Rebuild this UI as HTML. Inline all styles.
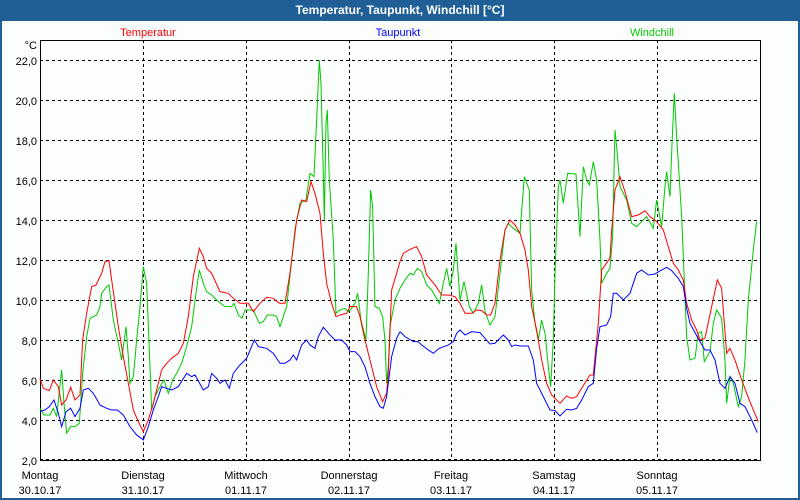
<!DOCTYPE html>
<html><head><meta charset="utf-8"><style>
html,body{margin:0;padding:0;width:800px;height:500px;overflow:hidden;background:#1f5f95;font-family:"Liberation Sans",sans-serif}
#t{position:absolute;left:0;top:0;width:800px;height:20px;line-height:20px;text-align:center;color:#fff;font-weight:bold;font-size:12px}
#w{position:absolute;left:2px;top:21px;width:796px;height:477px;background:#fcfefe}
svg{position:absolute;left:0;top:0}
</style></head><body>
<div id="t">Temperatur, Taupunkt, Windchill [°C]</div>
<div id="w"></div>
<svg width="800" height="500" font-family="Liberation Sans, sans-serif" font-size="11">
<g stroke="#000" stroke-width="1" stroke-dasharray="3,3" fill="none">
<path d="M40 60.5H760M40 100.5H760M40 140.5H760M40 180.5H760M40 220.5H760M40 260.5H760M40 300.5H760M40 340.5H760M40 380.5H760M40 420.5H760M40 459.5H760"/>
<path d="M143.5 40V460M246.5 40V460M349.5 40V460M451.5 40V460M554.5 40V460M657.5 40V460"/>
</g>
<rect x="40.5" y="40.5" width="720" height="420" fill="none" stroke="#000"/>
<g text-anchor="end" fill="#000">
<text x="37" y="49">°C</text>
<text x="37" y="65">22,0</text><text x="37" y="105">20,0</text><text x="37" y="145">18,0</text><text x="37" y="185">16,0</text><text x="37" y="225">14,0</text><text x="37" y="265">12,0</text><text x="37" y="305">10,0</text><text x="37" y="345">8,0</text><text x="37" y="385">6,0</text><text x="37" y="425">4,0</text><text x="37" y="465">2,0</text>
</g>
<g text-anchor="middle" fill="#000">
<text x="40" y="479">Montag</text><text x="40" y="494">30.10.17</text>
<text x="143" y="479">Dienstag</text><text x="143" y="494">31.10.17</text>
<text x="246" y="479">Mittwoch</text><text x="246" y="494">01.11.17</text>
<text x="349" y="479">Donnerstag</text><text x="349" y="494">02.11.17</text>
<text x="451" y="479">Freitag</text><text x="451" y="494">03.11.17</text>
<text x="554" y="479">Samstag</text><text x="554" y="494">04.11.17</text>
<text x="657" y="479">Sonntag</text><text x="657" y="494">05.11.17</text>
<text x="148" y="36" fill="#f00">Temperatur</text>
<text x="398" y="36" fill="#00f">Taupunkt</text>
<text x="652" y="36" fill="#0c0">Windchill</text>
</g>
<g fill="none" stroke-width="1" vector-effect="non-scaling-stroke">
<g transform="translate(40,40) scale(0.3333)">
<polyline vector-effect="non-scaling-stroke" stroke="#00c800" points="0,1105 12,1125 30,1125 40,1105 50,1130 65,990 72,1090 80,1180 92,1160 105,1160 118,1150 128,1000 140,890 150,835 170,825 180,800 185,760 200,740 207,735 220,840 235,910 245,960 258,860 265,950 270,1030 280,1010 290,900 300,800 310,680 320,730 330,980 335,1110 345,1070 360,1040 372,1020 385,1060 398,1020 410,1000 425,970 440,920 455,860 468,760 478,690 490,730 500,755 515,765 530,780 555,800 575,800 582,790 595,825 606,835 615,810 625,810 640,810 658,850 670,845 682,825 700,825 710,830 720,860 740,800 752,690 765,570 780,490 798,480 810,400 822,410 830,240 838,60 843,130 850,400 853,540 858,250 862,210 868,420 880,600 888,820 900,810 915,805 925,815 935,805 945,790 953,760 963,840 978,900 985,700 992,450 998,500 1005,800 1018,805 1028,830 1035,900 1040,1030 1045,980 1050,860 1065,780 1080,745"/>
<polyline vector-effect="non-scaling-stroke" stroke="#f00" points="0,1015 10,1045 28,1052 40,1020 55,1040 65,1095 78,1080 92,1042 105,1080 120,1065 128,900 140,820 155,740 168,735 185,700 195,665 207,662 215,720 235,860 250,950 265,1030 280,1110 295,1145 310,1175 325,1140 340,1090 355,1030 365,990 380,970 395,955 415,940 430,910 445,830 460,710 478,625 490,650 500,685 515,700 540,755 565,760 580,775 600,790 625,790 640,815 660,790 680,772 700,775 718,790 735,790 750,700 770,540 785,480 800,485 813,425 825,460 840,520 850,640 860,730 875,790 888,830 900,825 920,820 930,800 950,800 960,830 975,900 990,960 1010,1040 1028,1085 1040,1060 1045,1000 1055,750 1070,700 1080,665"/>
<polyline vector-effect="non-scaling-stroke" stroke="#00f" points="0,1115 15,1110 28,1100 42,1080 55,1120 65,1160 78,1115 92,1105 105,1130 120,1105 130,1050 145,1045 160,1060 180,1095 200,1105 215,1110 232,1110 250,1125 270,1160 290,1185 310,1200 325,1160 340,1110 355,1070 365,1040 380,1045 395,1050 415,1040 440,1000 455,1010 465,1005 490,1050 505,1040 515,1000 530,1015 540,1030 555,1020 568,1045 580,1000 600,975 620,955 643,900 655,920 680,925 700,940 720,970 735,970 750,960 760,945 770,960 785,915 800,900 810,915 825,925 835,890 850,862 870,885 885,900 905,900 920,915 930,935 945,935 960,950 975,980 990,1030 1005,1070 1020,1100 1030,1105 1040,1070 1045,1030 1055,950 1070,895 1080,875"/>
</g>
<g transform="translate(400,40) scale(0.3333)">
<polyline vector-effect="non-scaling-stroke" stroke="#00c800" points="0,745 15,720 30,700 40,705 52,685 65,695 80,735 95,750 118,790 130,730 140,685 150,740 160,690 168,610 180,780 192,725 208,800 220,820 235,790 245,735 255,815 270,855 285,830 300,700 315,570 325,550 340,565 360,580 373,410 388,450 395,750 405,850 415,900 425,840 435,880 445,980 452,1040 460,900 465,700 475,440 480,420 490,490 503,400 528,402 540,590 550,380 560,420 568,435 580,365 590,420 600,600 605,730 620,700 630,685 638,590 642,400 645,270 650,320 660,440 680,480 695,550 710,560 740,530 760,565 770,480 785,560 795,440 800,395 810,470 817,290 823,160 830,290 845,530 855,770 860,890 870,960 885,955 895,880 905,875 913,965 930,935 940,850 950,810 965,835 975,960 980,1090 990,1010 1000,1030 1015,1100 1025,1070 1035,960 1045,780 1060,630 1070,545"/>
<polyline vector-effect="non-scaling-stroke" stroke="#f00" points="0,665 10,640 30,628 50,620 65,650 80,705 105,735 125,765 145,765 165,770 180,790 195,820 215,820 230,810 245,812 260,825 272,825 285,790 300,660 315,570 330,540 345,555 360,580 375,630 385,690 395,800 410,870 425,960 440,1030 455,1065 480,1090 500,1068 515,1075 530,1070 545,1045 570,1005 580,1005 595,850 605,690 630,655 635,575 645,450 660,410 675,455 695,530 715,525 735,512 750,530 770,545 790,570 820,670 835,690 850,720 860,790 875,840 890,870 900,900 915,895 935,800 952,720 965,745 980,940 990,925 1005,960 1020,1005 1040,1060 1060,1110 1075,1145"/>
<polyline vector-effect="non-scaling-stroke" stroke="#00f" points="0,875 15,890 40,905 55,905 65,915 85,930 100,940 118,925 145,915 160,905 170,880 180,870 195,885 215,875 240,878 255,895 270,912 285,910 310,885 325,900 335,920 345,915 360,918 385,918 400,960 410,1030 430,1070 450,1110 465,1112 480,1128 500,1108 515,1110 530,1105 545,1080 565,1040 580,1030 590,925 600,860 620,855 632,830 640,760 650,760 670,780 690,760 710,700 725,690 745,705 765,702 785,690 800,682 815,692 835,715 850,740 860,805 870,850 885,878 900,905 915,930 930,930 945,960 960,1030 975,1045 990,1010 1005,1030 1020,1090 1035,1100 1055,1140 1072,1178"/>
</g>
</g>
</svg>
</body></html>
